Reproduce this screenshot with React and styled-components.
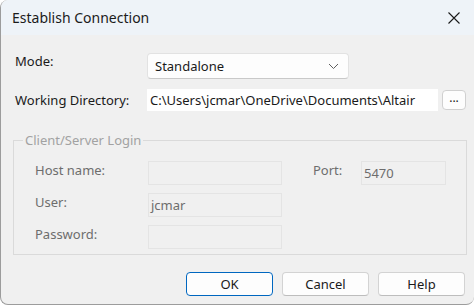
import React from 'react';
import styled, { createGlobalStyle } from 'styled-components';

const GlobalStyle = createGlobalStyle`
  html, body {
    margin: 0;
    padding: 0;
    background: #ffffff;
  }
  body {
    font-family: 'Noto Sans', 'Open Sans', sans-serif;
    font-size: 13px;
  }
`;

const Window = styled.div`
  box-sizing: border-box;
  width: 474px;
  height: 305px;
  background: #f0f0f0;
  border: 1px solid #9c9c9c;
  border-top: none;
  border-right: none;
  border-radius: 8px 0 8px 8px;
  overflow: hidden;
  display: flex;
  flex-direction: column;
  color: #1a1a1a;
`;

const TitleBar = styled.div`
  height: 35px;
  flex-shrink: 0;
  background: #eef3f8;
  display: flex;
  align-items: center;
  justify-content: space-between;
  padding: 0 14px 0 11px;
`;

const Title = styled.span`
  font-size: 14px;
  color: #1b1b1b;
`;

const Body = styled.div`
  flex: 1;
  padding: 18px 8px 0 11px;
  display: flex;
  flex-direction: column;
`;

const Row = styled.div`
  display: flex;
  align-items: center;
  height: ${p => p.$h}px;
  margin-bottom: ${p => p.$mb || 0}px;
`;

const Label = styled.span`
  width: ${p => p.$w}px;
  padding-left: 3px;
  box-sizing: border-box;
  flex-shrink: 0;
  color: #1a1a1a;
  position: relative;
  top: ${p => p.$shift || 0}px;
`;

const Select = styled.div`
  box-sizing: border-box;
  width: 202px;
  height: 26px;
  background: #fdfdfd;
  border: 1px solid #e2e2e2;
  border-bottom-color: #c9c9c9;
  border-radius: 4px;
  display: flex;
  align-items: center;
  justify-content: space-between;
  padding: 0 9px 0 7px;
  color: #1a1a1a;
`;

const TextBox = styled.div`
  box-sizing: border-box;
  width: 291px;
  height: 22px;
  background: #ffffff;
  display: flex;
  align-items: center;
  padding-left: 3px;
  white-space: nowrap;
  overflow: hidden;
`;

const SmallButton = styled.div`
  box-sizing: border-box;
  width: 24px;
  height: 20px;
  margin-left: 4px;
  background: #fdfdfd;
  border: 1px solid #d0d0d0;
  border-radius: 4px;
  display: flex;
  align-items: flex-end;
  justify-content: center;
  padding-bottom: 5px;
  font-size: 12px;
  line-height: 1;
`;

const Group = styled.fieldset`
  box-sizing: border-box;
  margin: 20px 0 0 1px;
  width: 454px;
  height: 124px;
  border: 1px solid #dadada;
  padding: 12px 0 0 21px;
  display: grid;
  grid-template-columns: 113px 134px 31px 48px 85px;
  grid-auto-rows: 24px;
  row-gap: 8px;
  align-content: start;
`;

const Legend = styled.legend`
  color: #a2a2a2;
  padding: 0 2px;
  margin-left: -12px;
`;

const Field = styled.div`
  box-sizing: border-box;
  height: 24px;
  border: 1px solid #e4e4e4;
  background: #f0f0f0;
  color: #6d6d6d;
  display: flex;
  align-items: center;
  padding-left: 2px;
  grid-column: ${p => p.$col};
`;

const GroupLabel = styled.span`
  color: #6d6d6d;
  grid-column: ${p => p.$col};
  line-height: 18px;
`;

const Footer = styled.div`
  display: flex;
  justify-content: flex-end;
  gap: 9px;
  margin-top: 17px;
  padding-right: 1px;
`;

const Button = styled.div`
  box-sizing: border-box;
  width: 87px;
  height: 24px;
  border-radius: 4px;
  background: #fdfdfd;
  border: 1px solid ${p => (p.$primary ? '#0067c0' : '#d3d3d3')};
  border-bottom-color: ${p => (p.$primary ? '#0067c0' : '#bdbdbd')};
  display: flex;
  align-items: center;
  justify-content: center;
  color: #1a1a1a;
`;

const Chevron = () => (
  <svg width="11" height="7" viewBox="0 0 11 7">
    <path d="M1 1 L5.5 5.5 L10 1" fill="none" stroke="#5f5f5f" strokeWidth="1" />
  </svg>
);

const Close = () => (
  <svg width="12" height="12" viewBox="0 0 12 12">
    <path d="M0.5 0.5 L11.5 11.5 M11.5 0.5 L0.5 11.5" stroke="#1a1a1a" strokeWidth="1.1" />
  </svg>
);

export default function App() {
  return (
    <>
      <GlobalStyle />
      <Window>
        <TitleBar>
          <Title>Establish Connection</Title>
          <Close />
        </TitleBar>
        <Body>
          <Row $h={26} $mb={10}>
            <Label $w={135} $shift={-5}>Mode:</Label>
            <Select>
              <span>Standalone</span>
              <Chevron />
            </Select>
          </Row>
          <Row $h={22}>
            <Label $w={135}>Working Directory:</Label>
            <TextBox>C:\Users\jcmar\OneDrive\Documents\Altair</TextBox>
            <SmallButton>...</SmallButton>
          </Row>
          <Group>
            <Legend>Client/Server Login</Legend>
            <GroupLabel $col="1">Host name:</GroupLabel>
            <Field $col="2" />
            <GroupLabel $col="4">Port:</GroupLabel>
            <Field $col="5">5470</Field>
            <GroupLabel $col="1">User:</GroupLabel>
            <Field $col="2">jcmar</Field>
            <GroupLabel $col="1">Password:</GroupLabel>
            <Field $col="2" />
          </Group>
          <Footer>
            <Button $primary>OK</Button>
            <Button>Cancel</Button>
            <Button>Help</Button>
          </Footer>
        </Body>
      </Window>
    </>
  );
}
